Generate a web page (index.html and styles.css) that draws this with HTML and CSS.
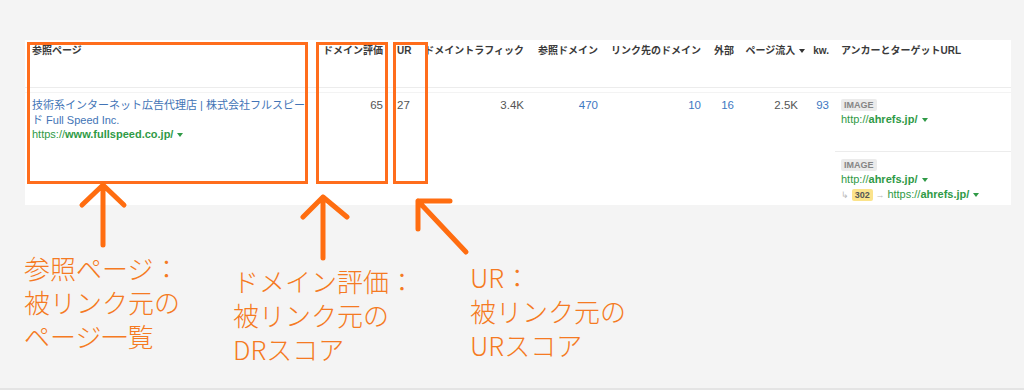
FILE: index.html
```html
<!DOCTYPE html>
<html lang="ja">
<head>
<meta charset="utf-8">
<title>Backlinks</title>
<link rel="stylesheet" href="styles.css">
</head>
<body>
<div class="page">
  <div class="panel">
    <div class="row head">
      <div class="c left">参照ページ</div>
      <div class="c">ドメイン評価</div>
      <div class="c left ur">UR</div>
      <div class="c">ドメイントラフィック</div>
      <div class="c">参照ドメイン</div>
      <div class="c">リンク先のドメイン</div>
      <div class="c">外部</div>
      <div class="c">ページ流入 <span class="caret dark"></span></div>
      <div class="c">kw.</div>
      <div class="c left anchor">アンカーとターゲットURL</div>
    </div>
    <div class="row data">
      <div class="c left page-cell">
        <a class="title">技術系インターネット広告代理店 | 株式会社フルスピード Full Speed Inc.</a>
        <div class="url">https://<b>www.fullspeed.co.jp/</b> <span class="caret"></span></div>
      </div>
      <div class="c num">65</div>
      <div class="c left num ur">27</div>
      <div class="c num">3.4K</div>
      <div class="c num link">470</div>
      <div class="c num link">10</div>
      <div class="c num link">16</div>
      <div class="c num pad">2.5K</div>
      <div class="c num link">93</div>
      <div class="c left anchor targets">
        <div class="target first">
          <span class="badge">IMAGE</span>
          <div class="url">http://<b>ahrefs.jp/</b> <span class="caret"></span></div>
        </div>
        <div class="target second">
          <span class="badge">IMAGE</span>
          <div class="url">http://<b>ahrefs.jp/</b> <span class="caret"></span></div>
          <div class="redirect"><span class="hook">↳</span> <span class="code">302</span> <span class="hook">→</span> <span class="url inline">https://<b>ahrefs.jp/</b> <span class="caret"></span></span></div>
        </div>
      </div>
    </div>
    <div class="box box1"></div>
    <div class="box box2"></div>
    <div class="box box3"></div>
  </div>

  <div class="notes">
    <p class="note n1">参照ページ：<br>被リンク元の<br>ページ一覧</p>
    <p class="note n2">ドメイン評価：<br>被リンク元の<br>DRスコア</p>
    <p class="note n3">UR：<br>被リンク元の<br>URスコア</p>
  </div>

  <svg class="arrows" width="1024" height="390" viewBox="0 0 1024 390">
    <g fill="none" stroke="#ff6d10" stroke-width="5" stroke-linecap="round" stroke-linejoin="round">
      <path d="M103 185 V245 M82 205 L103 185 L124 205"/>
      <path d="M323 197 V258 M303 217 L323 197 L347 217"/>
      <path d="M418 201 L466 252 M418 229 V201 H450"/>
    </g>
  </svg>
  <div class="bottom-line"></div>
</div>
</body>
</html>
```
FILE: styles.css
```css
html, body {
  margin: 0;
  padding: 0;
}
body {
  background: #f4f4f4;
  font-family: "Liberation Sans", "Noto Sans CJK JP", sans-serif;
  color: #333;
}
.page {
  position: relative;
  width: 1024px;
  height: 390px;
  overflow: hidden;
}
.panel {
  position: relative;
  margin: 40px 13px 0 25px;
  height: 165px;
  background: #fff;
  padding-left: 7px;
  box-sizing: border-box;
}
.row {
  display: grid;
  grid-template-columns: 278px 73px 37px 104px 74px 103px 33px 71px 24px 1fr;
}
.c {
  text-align: right;
  white-space: nowrap;
}
.c.left { text-align: left; }
.c.ur { padding-left: 14px; }
.c.anchor { padding-left: 12px; }

.head {
  height: 48px;
  border-bottom: 1px solid #ececec;
  margin-left: -7px;
  padding-left: 7px;
  font-size: 10px;
  font-weight: bold;
  line-height: 14px;
  padding-top: 4px;
  box-sizing: border-box;
  color: #3a3a3a;
}
.caret {
  display: inline-block;
  width: 0;
  height: 0;
  border-left: 3px solid transparent;
  border-right: 3px solid transparent;
  border-top: 4px solid #2f9a46;
  vertical-align: middle;
  margin-left: 1px;
}
.caret.dark { border-top-color: #333; }

.data {
  margin-top: 4px;
  border-top: 1px solid #f3f3f3;
  margin-left: -7px;
  padding-left: 7px;
  font-size: 11px;
  line-height: 14.5px;
  height: 111px;
  box-sizing: border-box;
}
.data > .c { padding-top: 5px; }
.page-cell { white-space: normal; padding-right: 2px; }
.title {
  color: #4274b6;
  display: block;
}
.url {
  color: #2f9a46;
  white-space: nowrap;
}
.url b { font-weight: bold; }
.url.inline { display: inline; }
.num { color: #555; font-size: 11.5px; }
.num.link { color: #3d78c2; }
.num.pad { padding-right: 7px; }

.targets { padding-top: 0 !important; }
.target.first {
  height: 58px;
  padding-top: 4px;
  box-sizing: border-box;
}
.target.second {
  margin-left: -6px;
  padding-left: 6px;
  border-top: 1px solid #ececec;
  padding-top: 5px;
}
.badge {
  display: inline-block;
  background: #ebebeb;
  color: #858585;
  font-size: 9px;
  font-weight: bold;
  line-height: 12px;
  padding: 0 3px;
  border-radius: 2px;
  margin-bottom: 1px;
}
.redirect {
  color: #aaa;
  font-size: 10px;
}
.redirect .hook { color: #bbb; font-size: 9px; }
.code {
  display: inline-block;
  background: #fbe38b;
  color: #555;
  font-size: 9px;
  font-weight: bold;
  line-height: 12px;
  padding: 0 3px;
  border-radius: 2px;
}
.redirect .url { font-size: 11px; }

.box {
  position: absolute;
  top: 2px;
  height: 142px;
  border: 3px solid #ff6d1c;
  box-sizing: border-box;
}
.box1 { left: 2px; width: 281px; }
.box2 { left: 291px; width: 72px; }
.box3 { left: 368px; width: 35px; }

.notes {
  display: flex;
  padding-left: 24px;
}
.note {
  margin: 0;
  font-family: "Noto Sans CJK JP", sans-serif;
  font-weight: 300;
  color: #f57a22;
  font-size: 26px;
  line-height: 34px;
  white-space: nowrap;
}
.n1 { width: 209px; margin-top: 46px; }
.n2 { width: 237px; margin-top: 59px; }
.n3 { margin-top: 55px; }

.arrows {
  position: absolute;
  left: 0;
  top: 0;
  pointer-events: none;
}
.bottom-line {
  position: absolute;
  left: 0;
  right: 0;
  bottom: 0;
  height: 2px;
  background: #e4e4e4;
}
```
